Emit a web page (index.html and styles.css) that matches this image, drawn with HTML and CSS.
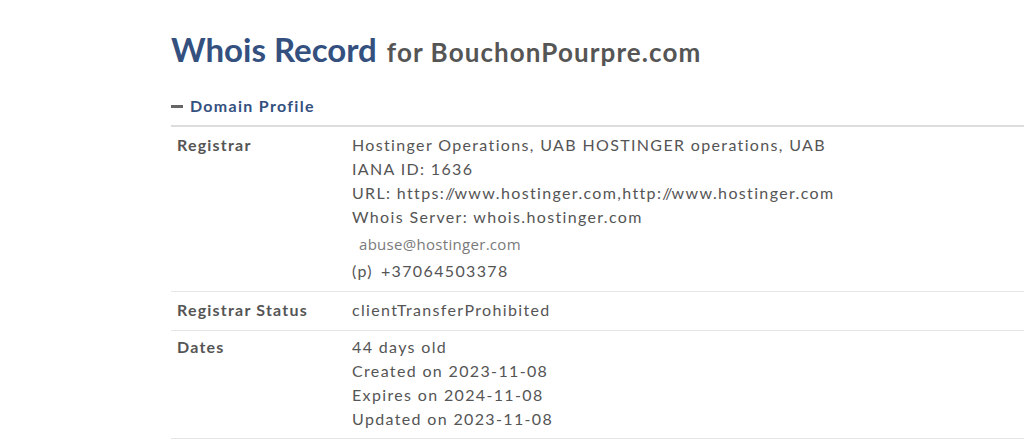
FILE: index.html
```html
<!DOCTYPE html>
<html lang="en">
<head>
<meta charset="utf-8">
<title>Whois Record for BouchonPourpre.com</title>
<link rel="stylesheet" href="styles.css">
</head>
<body>
<main class="page">
  <h1 class="title"><span class="title-main">Whois Record</span><span class="title-sub">for BouchonPourpre.com</span></h1>
  <section class="profile">
    <h2 class="profile-head"><span class="minus"></span>Domain Profile</h2>
    <div class="rows">
      <div class="row">
        <div class="label">Registrar</div>
        <div class="value">
          <div>Hostinger Operations, UAB HOSTINGER operations, UAB</div>
          <div>IANA ID: 1636</div>
          <div>URL: https:<span class="tight">//</span>www.hostinger.com,http:<span class="tight">//</span>www.hostinger.com</div>
          <div>Whois Server: whois.hostinger.com</div>
          <div class="email">abuse@hostinger.com</div>
          <div class="phone"><span class="ptag">(p)</span>+37064503378</div>
        </div>
      </div>
      <div class="row">
        <div class="label">Registrar Status</div>
        <div class="value">
          <div>clientTransferProhibited</div>
        </div>
      </div>
      <div class="row">
        <div class="label">Dates</div>
        <div class="value">
          <div>44 days old</div>
          <div>Created on 2023-11-08</div>
          <div>Expires on 2024-11-08</div>
          <div>Updated on 2023-11-08</div>
        </div>
      </div>
    </div>
  </section>
</main>
</body>
</html>
```
FILE: styles.css
```css
html, body {
  margin: 0;
  padding: 0;
  background: #fff;
}
body {
  font-family: Lato, "Open Sans", sans-serif;
  color: #555;
  overflow: hidden;
}
.page {
  margin-left: 171px;
  padding-top: 29px;
}
.title {
  margin: 0;
  font-size: 33px;
  line-height: 40px;
  font-weight: 700;
  white-space: nowrap;
}
.title-main {
  color: #34507f;
}
.title-sub {
  color: #555;
  font-size: 26px;
  letter-spacing: 1.1px;
  margin-left: 10px;
}
.profile {
  margin-top: 24px;
}
.profile-head {
  margin: 0;
  font-size: 16px;
  line-height: 20px;
  font-weight: 700;
  letter-spacing: 1.3px;
  color: #34507f;
  display: flex;
  align-items: center;
  gap: 7px;
  padding-bottom: 9px;
  border-bottom: 2px solid #ddd;
}
.minus {
  display: inline-block;
  width: 12px;
  height: 3px;
  background: #666;
}
.row {
  display: flex;
  border-bottom: 1px solid #e6e6e6;
  padding: 6px 0 8px 6px;
  font-size: 16px;
  line-height: 24px;
}
.row:last-child {
  padding-top: 4px;
  padding-bottom: 7px;
}
.label {
  width: 175px;
  flex: none;
  font-weight: 700;
  letter-spacing: 1.2px;
}
.value {
  flex: 1;
  white-space: nowrap;
  letter-spacing: 1.35px;
}
.tight {
  letter-spacing: -0.8px;
}
.email {
  font-family: "Open Sans", "Liberation Sans", sans-serif;
  font-size: 15px;
  letter-spacing: 0.3px;
  color: #7a7a7a;
  line-height: 30px;
  padding-left: 7px;
}
.ptag {
  margin-right: 8px;
}
```
